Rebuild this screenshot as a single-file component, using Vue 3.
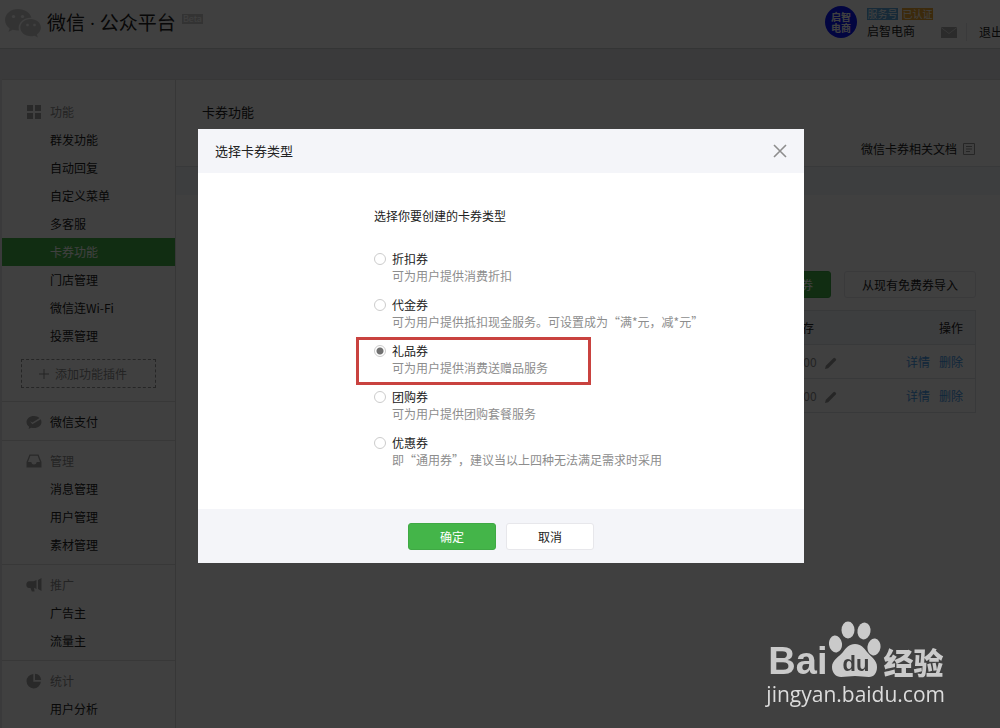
<template>
  <div class="page">
    <header class="topbar">
      <svg class="logo" viewBox="0 0 36 30">
        <path class="logo_bubble" d="M13 1C5.800 1 0 5.800 0 12c0 3.500 1.800 6.400 4.600 8.500L3.400 24l4.300-2.200c1.700.5 3.400.8 5.300.8h1.100c-.3-.8-.4-1.600-.4-2.500 0-5.900 5.200-10.300 11.900-10.300h.9C25.300 4.700 19.700 1 13 1z" />
        <path class="logo_bubble" d="M36 19.600c0-4.800-4.700-8.700-10.300-8.700-5.900 0-10.400 3.900-10.400 8.700s4.500 8.700 10.400 8.700c1.300 0 2.600-.2 3.800-.6l3.400 1.900-1-3.100c2.500-1.700 4.100-4.200 4.100-6.900z" />
        <circle class="logo_eye" cx="8.500" cy="8.500" r="1.600" />
        <circle class="logo_eye" cx="17.500" cy="8.500" r="1.600" />
        <circle class="logo_eye" cx="22.500" cy="17" r="1.300" />
        <circle class="logo_eye" cx="29.500" cy="17" r="1.300" />
      </svg>
      <h1 class="brand">微信 · 公众平台</h1>
      <span class="beta">Beta</span>
      <div class="account">
        <div class="avatar">启智<br />电商</div>
        <div class="account_info">
          <div class="tags">
            <span class="tag tag_blue">服务号</span>
            <span class="tag tag_orange">已认证</span>
          </div>
          <a class="account_name" href="#">启智电商</a>
        </div>
        <svg class="mail" viewBox="0 0 16 11">
          <rect class="mail_body" width="16" height="11" />
          <path class="mail_line" d="M0 0.500l8 6 8-6" />
        </svg>
        <a class="logout" href="#">退出</a>
      </div>
    </header>

    <div class="container">
      <nav class="sidebar">
        <section v-for="group in menu" :key="group.title" class="group" :class="{ group_first: group.plugin }">
          <component :is="group.items.length ? 'h2' : 'a'" class="group_title" :class="{ group_link: !group.items.length }" :href="group.items.length ? null : '#'">
            <svg class="group_icon" viewBox="0 0 16 16">
              <path v-for="d in icons[group.icon]" :key="d" fill-rule="evenodd" :d="d" />
            </svg>
            {{ group.title }}
          </component>
          <a v-for="item in group.items" :key="item" class="menu_item" :class="{ active: item === activeItem }" href="#">{{ item }}</a>
          <button v-if="group.plugin" class="plugin" type="button">
            <svg class="plus" viewBox="0 0 10 10"><path d="M5 0v10M0 5h10" /></svg>
            添加功能插件
          </button>
        </section>
      </nav>

      <main class="content">
        <h2 class="content_title">卡券功能</h2>
        <div class="docs">
          <a href="#">微信卡券相关文档</a>
          <svg class="docs_icon" viewBox="0 0 12 12">
            <path d="M.5.5h11v11H.5zM3 3.500h6M3 6h6M3 8.500h4" />
          </svg>
        </div>
        <div class="tabs"></div>
        <div class="toolbar">
          <button class="btn btn_add" type="button">添加优惠券</button>
          <button class="btn btn_import" type="button">从现有免费券导入</button>
        </div>
        <table class="coupons">
          <thead>
            <tr>
              <th class="stock">库存</th>
              <th class="actions">操作</th>
            </tr>
          </thead>
          <tbody>
            <tr v-for="row in coupons" :key="row.id">
              <td class="stock">
                {{ row.stock }}
                <svg class="pencil" viewBox="0 0 12 12">
                  <path d="M0 12l.8-3.200L8.400 1.200a1.300 1.300 0 0 1 1.800 0l.6.6a1.300 1.300 0 0 1 0 1.800L3.200 11.200z" />
                </svg>
              </td>
              <td class="actions">
                <a href="#">详情</a>
                <a href="#">删除</a>
              </td>
            </tr>
          </tbody>
        </table>
      </main>
    </div>
  </div>

  <div class="mask">
    <form class="dialog" role="dialog" aria-labelledby="dialog-title" @submit.prevent>
      <div class="dialog_head">
        <h3 id="dialog-title" class="dialog_title">选择卡券类型</h3>
        <button class="close" type="button" aria-label="关闭">
          <svg class="close_icon" viewBox="0 0 14 14"><path d="M1 1l12 12M13 1L1 13" /></svg>
        </button>
      </div>
      <div class="dialog_body">
        <p class="question">选择你要创建的卡券类型</p>
        <div class="options">
          <label v-for="type in types" :key="type.value" class="option" :class="{ marked: type.value === 'gift' }">
            <input v-model="selected" class="radio" type="radio" name="type" :value="type.value" />
            <span class="option_name">{{ type.name }}</span>
            <span class="option_desc">{{ type.desc }}</span>
          </label>
        </div>
      </div>
      <div class="dialog_foot">
        <button class="btn btn_ok" type="submit">确定</button>
        <button class="btn btn_cancel" type="button">取消</button>
      </div>
    </form>
  </div>

  <div class="watermark">
    <div class="wm_logo">
      <span class="wm_bai">Bai</span>
      <span class="wm_paw">
        <svg class="paw" viewBox="0 0 52 57">
          <ellipse cx="6.500" cy="23" rx="6.500" ry="8.500" transform="rotate(-8 6.500 23)" />
          <ellipse cx="19" cy="9" rx="6.500" ry="8.500" />
          <ellipse cx="35" cy="10" rx="6.500" ry="8.500" transform="rotate(10 35 10)" />
          <ellipse cx="45" cy="26" rx="6.500" ry="8.500" transform="rotate(8 45 26)" />
          <path d="M26 23c-6 0-9 4-12 8-4 5-11 8-11 15 0 6 4 10 9 10 5 0 9-1 14-1s9 1 14 1c5 0 8-4 8-10 0-7-6-10-10-15-3-4-6-8-12-8z" />
        </svg>
        <span class="wm_du">du</span>
      </span>
      <span class="wm_cn">经验</span>
    </div>
    <div class="wm_url">jingyan.baidu.com</div>
  </div>
</template>

<script setup>
import { ref } from 'vue';

const activeItem = '卡券功能';
const selected = ref('gift');

const menu = [
  {
    title: '功能',
    icon: 'grid',
    plugin: true,
    items: ['群发功能', '自动回复', '自定义菜单', '多客服', '卡券功能', '门店管理', '微信连Wi-Fi', '投票管理']
  },
  { title: '微信支付', icon: 'pay', items: [] },
  { title: '管理', icon: 'inbox', items: ['消息管理', '用户管理', '素材管理'] },
  { title: '推广', icon: 'horn', items: ['广告主', '流量主'] },
  { title: '统计', icon: 'pie', items: ['用户分析'] }
];

const icons = {
  grid: ['M1 1h6v6H1zM9 1h6v6H9zM1 9h6v6H1zM9 9h6v6H9z'],
  pay: ['M8 2C3.600 2 .5 4.700.5 8c0 1.900 1 3.600 2.600 4.700L2.600 15l2.600-1.300c.9.3 1.800.4 2.800.4 4.400 0 7.500-2.700 7.500-6.100 0-1-.3-1.900-.8-2.700L6.300 10.300 4 7.300l2.400 1.100L13.600 4C12.200 2.700 10.200 2 8 2z'],
  inbox: ['M3.500 1.500h9L15.500 9v5.500H.5V9zM4.400 2.700L2 9h3.300c.3 1.700 1.300 2.500 2.700 2.500s2.400-.8 2.700-2.500H14l-2.400-6.300z'],
  horn: ['M10.500 3v9L8 10.800l.6 3.700H5.800L4.500 11H3C1.200 11 .3 9.500.3 7.500S1.500 4.200 3 4.200h4.500z', 'M12 3l3.500-2v13L12 12z'],
  pie: ['M7.300 1v7.700h7.600A7.200 7.200 0 1 1 7.300 1z', 'M9 .8A7 7 0 0 1 15.200 7H9z']
};

const coupons = [
  { id: 1, stock: 1000 },
  { id: 2, stock: 1000 }
];

const types = [
  { value: 'discount', name: '折扣券', desc: '可为用户提供消费折扣' },
  { value: 'cash', name: '代金券', desc: '可为用户提供抵扣现金服务。可设置成为“满*元，减*元”' },
  { value: 'gift', name: '礼品券', desc: '可为用户提供消费送赠品服务' },
  { value: 'groupon', name: '团购券', desc: '可为用户提供团购套餐服务' },
  { value: 'general', name: '优惠券', desc: '即“通用券”，建议当以上四种无法满足需求时采用' }
];
</script>

<style>
body {
  margin: 0;
  background: #e7e8eb;
  font-family: "Noto Sans CJK SC", "Open Sans", sans-serif;
  font-size: 12px;
  line-height: 18px;
}
</style>

<style scoped>
h1, h2, h3, p {
  margin: 0;
  font-weight: normal;
}

a {
  color: inherit;
  text-decoration: none;
}

button {
  font: inherit;
  cursor: pointer;
}

.page {
  display: flex;
  flex-direction: column;
  height: 100vh;
  overflow: hidden;
  color: #222;
}

/* шапка */
.topbar {
  display: flex;
  flex: none;
  align-items: center;
  box-sizing: border-box;
  height: 49px;
  padding-left: 5px;
  background: #fff;
  border-bottom: 1px solid #d0d1d4;
}

.logo {
  width: 36px;
  height: 30px;
  margin-bottom: 2px;
}

.logo_bubble {
  fill: #ccc;
}

.logo_eye {
  fill: #fff;
}

.brand {
  margin: 0 0 2px 6px;
  font-family: "Open Sans", "Noto Sans CJK SC", sans-serif;
  font-size: 19px;
  line-height: 28px;
  font-weight: normal;
  white-space: nowrap;
}

.beta {
  align-self: flex-start;
  margin: 14px 0 0 6px;
  padding: 0 1px;
  background: #ccc;
  color: #fff;
  font-size: 9px;
  line-height: 10px;
}

.account {
  display: flex;
  align-items: center;
  margin: 0 -3px 4px auto;
  white-space: nowrap;
}

.avatar {
  display: flex;
  align-items: center;
  justify-content: center;
  width: 32px;
  height: 32px;
  border-radius: 50%;
  background: #0a14ff;
  color: #fff;
  font-size: 10px;
  line-height: 11px;
  font-weight: bold;
}

.account_info {
  margin: 0 8px 0 10px;
  padding-top: 4px;
}

.tags {
  display: flex;
  gap: 4px;
}

.tag {
  width: 31px;
  color: #fff;
  font-size: 10px;
  line-height: 12px;
  text-align: center;
}

.tag_blue {
  background: #5ba8e0;
}

.tag_orange {
  background: #f0a830;
}

.account_name {
  display: block;
  margin-top: 2px;
}

.mail {
  width: 16px;
  height: 11px;
  margin-top: 20px;
}

.mail_body {
  fill: #aaa;
}

.mail_line {
  fill: none;
  stroke: #ddd;
}

.logout {
  margin: 20px 0 0 9px;
  padding-left: 12px;
  border-left: 1px solid #e7e7eb;
}

.container {
  display: flex;
  flex: 1;
  margin: 30px 0 0 2px;
  background: #fff;
  border-top: 1px solid #d9dadc;
}

/* меню слева */
.sidebar {
  flex: none;
  width: 173px;
  border-right: 1px solid #d9dadc;
}

.group {
  padding: 6px 0 5px;
  border-top: 1px solid #dedede;
}

.group_first {
  padding: 18px 0 13px;
  border-top: 0;
}

.group_title {
  display: flex;
  align-items: center;
  gap: 8px;
  padding-left: 24px;
  color: #8d8d8d;
  font-size: 12px;
  line-height: 28px;
}

.group_link {
  color: #222;
  line-height: 27px;
}

.group_icon {
  width: 16px;
  height: 16px;
  fill: #a3a3a3;
}

.menu_item {
  display: block;
  padding-left: 48px;
  line-height: 28px;
}

.menu_item.active {
  background: #44b549;
  color: #fff;
}

.plugin {
  display: flex;
  align-items: center;
  gap: 6px;
  box-sizing: border-box;
  height: 29px;
  width: 135px;
  margin: 9px 0 0 19px;
  padding: 0 0 0 17px;
  background: none;
  border: 1px dashed #999;
  color: #8d8d8d;
}

.plus {
  width: 10px;
  height: 10px;
  stroke: #8d8d8d;
}

/* основная часть */
.content {
  flex: 1;
}

.content_title {
  padding: 22px 26px 0;
  font-size: 13px;
  line-height: 20px;
}

.docs {
  display: flex;
  align-items: center;
  justify-content: flex-end;
  gap: 6px;
  margin: 18px 25px 8px;
}

.docs_icon {
  width: 12px;
  height: 12px;
  fill: none;
  stroke: #999;
}

.tabs {
  height: 28px;
  background: #f4f5f9;
  border-top: 1px solid #e0e1e5;
}

.toolbar {
  display: flex;
  justify-content: flex-end;
  gap: 13px;
  margin: 76px 24px 12px;
}

.btn {
  box-sizing: border-box;
  height: 27px;
  padding: 0 17px;
  border: 1px solid #e7e7eb;
  border-radius: 3px;
  background: #fff;
  color: #222;
  line-height: 25px;
}

.btn_add, .btn_ok {
  background: #44b549;
  border-color: #3fa944;
  color: #fff;
}

.coupons {
  width: calc(100% - 50px);
  margin: 0 24px 0 26px;
  border: 1px solid #e0e1e5;
  border-collapse: collapse;
}

.coupons tr {
  height: 34px;
  border-bottom: 1px solid #e0e1e5;
}

.coupons th {
  background: #f4f5f9;
  font-weight: normal;
}

.coupons td, .coupons th {
  padding: 0;
}

.coupons .stock {
  width: 186px;
  padding-left: 587px;
  text-align: left;
}

.coupons td.stock {
  color: #8d8d8d;
}

.pencil {
  width: 12px;
  height: 12px;
  margin-left: 6px;
  fill: #999;
  vertical-align: -2px;
}

.coupons .actions {
  padding-right: 12px;
  text-align: right;
  white-space: nowrap;
}

.actions a {
  margin-left: 9px;
  color: #459ae9;
}

/* диалог */
.mask {
  position: fixed;
  inset: 0;
  display: flex;
  justify-content: center;
  align-items: flex-start;
  padding: 129px 0 0 2px;
  background: rgba(0, 0, 0, 0.75);
}

.dialog {
  width: 606px;
  background: #fff;
  color: #222;
}

.dialog_head {
  display: flex;
  align-items: center;
  justify-content: space-between;
  height: 44px;
  padding: 0 17px;
  background: #f4f5f9;
}

.dialog_title {
  font-size: 13px;
}

.close {
  display: flex;
  padding: 0;
  border: 0;
  background: none;
}

.close_icon {
  width: 14px;
  height: 14px;
  stroke: #8d8d8d;
  stroke-width: 1.6;
}

.dialog_body {
  padding: 34px 24px 41px 176px;
}

.question {
  margin-bottom: 25px;
}

.options {
  display: flex;
  flex-direction: column;
  gap: 12px;
}

.option {
  position: relative;
  display: grid;
  grid-template-columns: 12px 1fr;
  column-gap: 6px;
  align-items: center;
  line-height: 17px;
}

.option.marked::before {
  content: "";
  position: absolute;
  top: -5px;
  left: -18px;
  box-sizing: border-box;
  width: 235px;
  height: 48px;
  border: 3px solid #c9423f;
}

.radio {
  appearance: none;
  box-sizing: border-box;
  width: 12px;
  height: 12px;
  margin: 0;
  border: 1px solid #ccc;
  border-radius: 50%;
  background: #fff;
}

.radio:checked {
  background: radial-gradient(circle, #707070 3px, #fff 4px);
}

.option_desc {
  grid-column: 2;
  color: #8d8d8d;
}

.dialog_foot {
  display: flex;
  justify-content: center;
  gap: 10px;
  padding: 14px 0 13px;
  background: #f4f5f9;
}

.btn_ok, .btn_cancel {
  width: 88px;
}

/* водяной знак */
.watermark {
  position: fixed;
  right: 55px;
  bottom: 20px;
  color: #cacaca;
}

.wm_logo {
  display: flex;
  align-items: flex-end;
  gap: 2px;
  height: 57px;
  margin: 0 0 2px 2px;
}

.wm_bai {
  font: bold 38px/34px "Liberation Sans", sans-serif;
}

.wm_paw {
  position: relative;
  display: flex;
}

.paw {
  width: 52px;
  height: 57px;
  fill: #cacaca;
}

.wm_du {
  position: absolute;
  left: 13px;
  bottom: 2px;
  color: #404040;
  font: bold 22px/24px "Liberation Sans", sans-serif;
}

.wm_cn {
  font-size: 30px;
  line-height: 34px;
  font-weight: 900;
}

.wm_url {
  color: #dcdcdc;
  font: 21px/28px "Open Sans", sans-serif;
}
</style>
